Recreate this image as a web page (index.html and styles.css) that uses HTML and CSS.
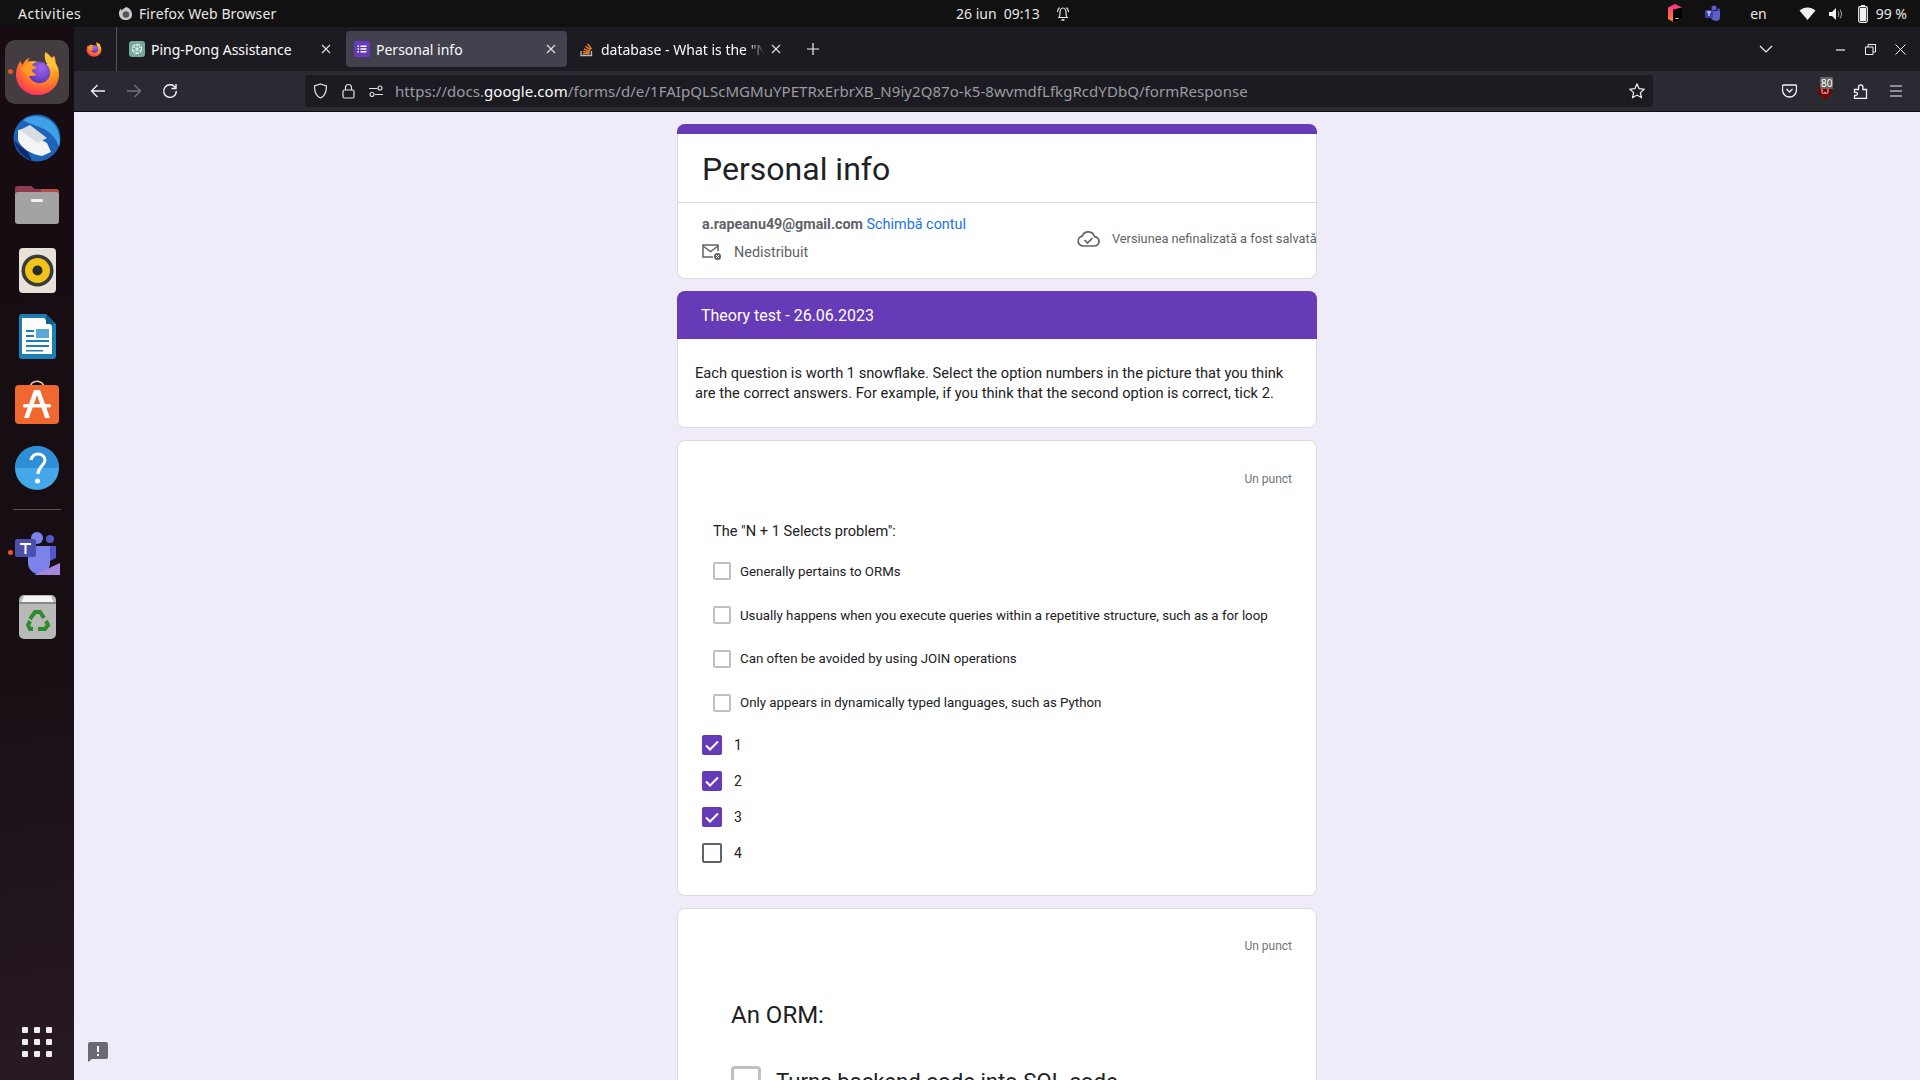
FILE: index.html
```html
<!DOCTYPE html>
<html lang="en">
<head>
    <meta charset="UTF-8">
    <title>Personal info</title>
    <link rel="stylesheet" href="styles.css">
</head>
<body>
    <svg class="defs" width="0" height="0">
        <defs>
            <radialGradient id="fx_flame" cx="0.65" cy="0.2" r="1">
                <stop offset="0" stop-color="#ffde3d"/>
                <stop offset="0.45" stop-color="#ff8a1f"/>
                <stop offset="0.8" stop-color="#ff3a55"/>
                <stop offset="1" stop-color="#d6148c"/>
            </radialGradient>
            <radialGradient id="fx_globe" cx="0.6" cy="0.3" r="0.8">
                <stop offset="0" stop-color="#a565ee"/>
                <stop offset="1" stop-color="#4a2fb5"/>
            </radialGradient>
            <linearGradient id="jb_side" x1="0" y1="0" x2="0" y2="1">
                <stop offset="0" stop-color="#ff2f8e"/>
                <stop offset="1" stop-color="#ff8a1f"/>
            </linearGradient>
            <symbol id="firefox" viewBox="0 0 48 48">
                <path fill="url(#fx_flame)" d="M41 7c2 4 1 6 2 8 3 5 3 9 3 11 0 12-10 21-22 21S2 38 2 26c0-6 2-11 5-14 0 2 1 4 2 4 1-3 4-6 7-7-1 2-2 3-2 4 3-1 7-1 10 0 4 1 7 3 9 6 0-5 3-8 8-12z"/>
                <circle cx="26" cy="24" r="11" fill="url(#fx_globe)"/>
                <path fill="#ff9a26" d="M6 20c4-3 8-5 11-4 4 1 5 2 6 4-2 0-4 1-5 2 1 2 3 3 5 4-3 2-6 2-9 1-3-2-5-4-8-7z"/>
                <path fill="#ffc33a" d="M32 3c6 4 12 11 13 21-3-5-7-8-12-10-2-4-2-8-1-11z"/>
            </symbol>
        </defs>
    </svg>

    <div class="topbar">
        <span class="top_activities">Activities</span>
        <span class="top_app">
            <svg width="15" height="15" viewBox="0 0 16 16"><path fill="#c9c9c9" d="M9 1c3 1 6 4 6 8 0 4-3 6-7 6s-7-3-7-7c0-2 1-4 2-5l1 2c1-2 3-3 5-4z"/><circle cx="8.500" cy="9" r="3.500" fill="#555"/></svg>
            Firefox Web Browser
        </span>
        <div class="top_clock">
            <span>26 iun&nbsp; 09:13</span>
            <svg width="14" height="16" viewBox="0 0 14 16" fill="none" stroke="#e8e8e8" stroke-width="1.200"><path d="M3 11.500c1-1 1-3 1-5s1-4.500 3-4.500 3 2.500 3 4.500 0 4 1 5zM1.500 6c0-2 1-3.500 2-4.500M12.500 6c0-2-1-3.500-2-4.500"/><path d="M5.500 14h3" stroke-width="1.600"/></svg>
        </div>
        <div class="top_status">
            <svg class="st_jb" width="16" height="19" viewBox="0 0 16 19"><path fill="url(#jb_side)" d="M8 0l7 3.500V15l-7 4-7-4V3.500z"/><path fill="#000" d="M6 5.500l9-2V15l-7 4-2-1.200z"/><path d="M8.500 14.500h3" stroke="#ddd"/></svg>
            <svg class="st_teams" width="17" height="17" viewBox="0 0 17 17"><circle cx="10" cy="3" r="2.500" fill="#5d5fc9"/><circle cx="14.500" cy="5" r="1.700" fill="#4649b0"/><path fill="#5d5fc9" d="M6 6h10v6a4 4 0 0 1-4 4 6 6 0 0 1-6-6z"/><rect x="1" y="5" width="8" height="8" rx="1" fill="#3f42a8"/><path d="M3 7h4M5 7v4" stroke="#fff"/></svg>
            <span class="st_lang">en</span>
            <svg class="st_wifi" width="17" height="13" viewBox="0 0 17 13"><path fill="#f2f2f2" d="M0.500 3.500C3 1.500 5.500.5 8.500.5s5.500 1 8 3l-8 9.500z"/></svg>
            <svg class="st_sound" width="14" height="14" viewBox="0 0 14 14"><path fill="#f2f2f2" d="M0 5h3l4-4v12l-4-4H0z"/><path fill="none" stroke="#aaa" d="M9 4c1 2 1 4 0 6M11 2.500c2 3 2 6 0 9"/></svg>
            <svg class="st_batt" width="10" height="18" viewBox="0 0 10 18"><rect x="3" width="4" height="2" fill="#f2f2f2"/><rect x=".7" y="1.700" width="8.600" height="15.600" rx="1.500" fill="none" stroke="#f2f2f2" stroke-width="1.200"/><rect x="2" y="3" width="6" height="13" fill="#f2f2f2"/></svg>
            <span class="st_pct">99 %</span>
        </div>
    </div>

    <div class="desktop">
        <nav class="dock">
            <div class="dock_slot dock_active">
                <span class="dock_dot"></span>
                <svg width="47" height="47"><use href="#firefox"/></svg>
            </div>
            <div class="dock_slot">
                <svg width="48" height="48" viewBox="0 0 48 48">
                    <circle cx="24" cy="24" r="23.500" fill="#1d63b8"/>
                    <path fill="#3fa0e8" d="M10 6c8-6 22-5 30 3 6 6 8 18 6 24-3-9-8-14-15-18-8-4-15-5-21-9z"/>
                    <path fill="#0f2a6e" d="M1 26c2 9 8 17 18 21l-4-9-8-6z"/>
                    <path fill="#f4f4f4" d="M5 16l6-1 23 14 4 9-9 4c-10-1-21-8-24-16z"/>
                    <path fill="#d9dde2" d="M7 16l10-5 17 13-9 5z"/>
                </svg>
            </div>
            <div class="dock_slot">
                <svg width="44" height="40" viewBox="0 0 44 40">
                    <path fill="#8e3b52" d="M0 5a3 3 0 0 1 3-3h13l4 3h21a3 3 0 0 1 3 3v10H0z"/>
                    <path fill="#c4563c" d="M26 5h15a3 3 0 0 1 3 3v10H26z" opacity=".7"/>
                    <rect y="8" width="44" height="32" rx="3" fill="#a3a3a3"/>
                    <rect x="16" y="15" width="12" height="3" rx="1" fill="#f0f0f0"/>
                </svg>
            </div>
            <div class="dock_slot">
                <svg width="37" height="45" viewBox="0 0 37 45">
                    <rect width="37" height="45" rx="4" fill="#e6e2d8"/>
                    <circle cx="18.500" cy="22.500" r="16" fill="#3a3a3a"/>
                    <circle cx="18.500" cy="22.500" r="12.500" fill="#f0c419"/>
                    <circle cx="18.500" cy="22.500" r="5" fill="#2a2a2a"/>
                </svg>
            </div>
            <div class="dock_slot">
                <svg width="37" height="45" viewBox="0 0 37 45">
                    <path fill="#1b7fb5" d="M3 0h24l10 10v32a3 3 0 0 1-3 3H3a3 3 0 0 1-3-3V3a3 3 0 0 1 3-3z"/>
                    <path fill="#fff" d="M3 4h22l8 8v28H3z"/>
                    <path fill="#0f5f8f" d="M27 0l10 10H27z"/>
                    <path fill="#1b7fb5" d="M7 16h8v2H7zM7 21h8v2H7zM7 26h23v2H7zM7 31h23v2H7zM7 36h17v1.500H7z"/>
                    <path fill="#5aa8d6" d="M17 15h13v9H17z"/>
                </svg>
            </div>
            <div class="dock_slot">
                <svg width="44" height="44" viewBox="0 0 44 44">
                    <path fill="none" stroke="#e8c9a8" stroke-width="1.500" d="M15 8c0-9 14-9 14 0"/>
                    <rect y="5" width="44" height="39" rx="4" fill="#f0682f"/>
                    <path fill="#fff" d="M19 10h6l10 28h-5l-8-23-8 23H9z"/>
                    <rect x="8" y="24" width="28" height="3.500" rx="1.500" fill="#fff"/>
                </svg>
            </div>
            <div class="dock_slot">
                <svg width="44" height="44" viewBox="0 0 44 44">
                    <circle cx="22" cy="22" r="22" fill="#45a8e8"/>
                    <path fill="#2f8fd6" d="M0 22a22 22 0 0 1 44 0z"/>
                    <path fill="none" stroke="#fff" stroke-width="3" d="M16 14c1-4 4-6 7-6 4 0 7 3 7 6 0 6-7 6-7 14"/>
                    <circle cx="22.500" cy="35" r="2.500" fill="#fff"/>
                </svg>
            </div>
            <div class="dock_sep"></div>
            <div class="dock_slot dock_slot_short">
                <span class="dock_dot"></span>
                <svg width="46" height="43" viewBox="0 0 46 43">
                    <circle cx="23" cy="6" r="6" fill="#7b83eb"/>
                    <circle cx="36" cy="7" r="4" fill="#5059c9"/>
                    <path fill="#5059c9" d="M30 14h12v12l-12 6z"/>
                    <path fill="#7b83eb" d="M14 14h22v17a11 11 0 0 1-22 0z"/>
                    <rect x="1" y="7" width="21" height="18" rx="2" fill="#4b50ad"/>
                    <path fill="#fff" d="M6 11h11v2h-4.500v9h-2v-9H6z"/>
                    <path fill="#a487dc" d="M20 43l26-12v12z"/>
                </svg>
            </div>
            <div class="dock_slot dock_slot_short">
                <svg width="37" height="44" viewBox="0 0 37 44">
                    <rect width="37" height="44" rx="5" fill="#b9b9b7"/>
                    <path fill="#f4f4f4" d="M5 1h27l3 7H2z"/>
                    <rect x="0" y="7" width="37" height="2" fill="#888"/>
                    <g fill="none" stroke="#2e8b2e" stroke-width="4">
                        <path d="M11 24l5-7h5l4 6"/>
                        <path d="M27 26l2 4-3 4h-7"/>
                        <path d="M14 34h-3l-2-4 2-4"/>
                    </g>
                </svg>
            </div>
            <div class="dock_grid">
                <i></i><i></i><i></i><i></i><i></i><i></i><i></i><i></i><i></i>
            </div>
        </nav>

        <div class="browser">
            <div class="tabbar">
                <div class="tab_logo"><svg width="16" height="16"><use href="#firefox"/></svg></div>
                <div class="tab">
                    <svg class="favicon" width="16" height="16" viewBox="0 0 16 16">
                        <rect width="16" height="16" rx="3" fill="#74aa9c"/>
                        <circle cx="8" cy="8" r="4.500" fill="none" stroke="#fff" stroke-width="1.200" stroke-dasharray="4 1"/>
                        <path d="M5 6l6 4M11 6l-6 4M8 3.500v9" stroke="#fff" stroke-width=".7"/>
                    </svg>
                    <span class="tab_title">Ping-Pong Assistance</span>
                    <svg class="tab_close" width="10" height="10" viewBox="0 0 10 10"><path d="M1 1l8 8M9 1l-8 8" stroke="#e3e3e6" stroke-width="1.100"/></svg>
                </div>
                <div class="tab tab_active">
                    <svg class="favicon" width="16" height="16" viewBox="0 0 16 16">
                        <rect width="16" height="16" rx="1" fill="#673ab7"/>
                        <path d="M3.500 4.500h1.500v1.500H3.500zM3.500 7.300h1.500v1.500H3.500zM3.500 10h1.500v1.500H3.500zM6.500 4.500h6v1.500h-6zM6.500 7.300h6v1.500h-6zM6.500 10h6v1.500h-6z" fill="#fff"/>
                    </svg>
                    <span class="tab_title">Personal info</span>
                    <svg class="tab_close" width="10" height="10" viewBox="0 0 10 10"><path d="M1 1l8 8M9 1l-8 8" stroke="#e3e3e6" stroke-width="1.100"/></svg>
                </div>
                <div class="tab">
                    <svg class="favicon" width="16" height="16" viewBox="0 0 16 16" fill="none">
                        <path d="M2 10v4.500h10.500V10" stroke="#bcbbbb" stroke-width="1.300"/>
                        <path d="M4 12.500h6.500M4.200 10.300l6.300 1M5 7.800l6 2.500M6.500 5.300l5.200 3.600M8.700 3l3.800 5" stroke="#f48024" stroke-width="1.300"/>
                    </svg>
                    <span class="tab_title tab_fade">database - What is the "N+1 selects problem" in ORM</span>
                    <svg class="tab_close" width="10" height="10" viewBox="0 0 10 10"><path d="M1 1l8 8M9 1l-8 8" stroke="#e3e3e6" stroke-width="1.100"/></svg>
                </div>
                <svg class="tab_new" width="14" height="14" viewBox="0 0 14 14"><path d="M7 1v12M1 7h12" stroke="#f2f2f4" stroke-width="1.200"/></svg>
                <svg class="tab_list" width="14" height="8" viewBox="0 0 14 8" fill="none"><path d="M1 1l6 6 6-6" stroke="#f2f2f4" stroke-width="1.200"/></svg>
                <div class="win_btns">
                    <svg width="11" height="11" viewBox="0 0 11 11"><path d="M1 6h9" stroke="#f2f2f4" stroke-width="1.200"/></svg>
                    <svg width="11" height="11" viewBox="0 0 11 11" fill="none" stroke="#f2f2f4"><path d="M.5 3h7.500v7.500H.5zM3 3V.5h7.500V8H8"/></svg>
                    <svg width="11" height="11" viewBox="0 0 11 11"><path d="M.5.5l10 10M10.500.5l-10 10" stroke="#f2f2f4"/></svg>
                </div>
            </div>

            <div class="toolbar">
                <svg class="tb_back" width="16" height="16" viewBox="0 0 16 16" fill="none" stroke="#f2f2f4" stroke-width="1.300"><path d="M15 8H1.500M7.500 2L1.500 8l6 6"/></svg>
                <svg class="tb_fwd" width="16" height="16" viewBox="0 0 16 16" fill="none" stroke="#74737a" stroke-width="1.300"><path d="M1 8h13.500M8.500 2l6 6-6 6"/></svg>
                <svg class="tb_reload" width="16" height="16" viewBox="0 0 16 16" fill="none" stroke="#f2f2f4" stroke-width="1.400"><path d="M13.500 5A6.300 6.300 0 1 0 14.300 8"/><path d="M14 1v4.500H9.500" /></svg>
                <div class="urlbar">
                    <svg width="15" height="16" viewBox="0 0 15 16" fill="none" stroke="#e3e3e6" stroke-width="1.200"><path d="M7.500 1l6 2c0 6-1 10-6 12C2.500 13 1.500 9 1.500 3z"/></svg>
                    <svg class="ub_lock" width="13" height="16" viewBox="0 0 13 16" fill="none" stroke="#e3e3e6" stroke-width="1.200"><rect x="1" y="7" width="11" height="8" rx="1.500"/><path d="M3.500 7V4.500a3 3 0 0 1 6 0V7"/></svg>
                    <svg class="ub_perm" width="15" height="12" viewBox="0 0 15 12" fill="none" stroke="#e3e3e6" stroke-width="1.100"><path d="M0 3.500h8.500M14 9.500H6"/><circle cx="11" cy="3" r="2"/><circle cx="3" cy="9.500" r="2"/></svg>
                    <span class="ub_text">https://docs.<b>google.com</b>/forms/d/e/1FAIpQLScMGMuYPETRxErbrXB_N9iy2Q87o-k5-8wvmdfLfkgRcdYDbQ/formResponse</span>
                    <svg class="ub_star" width="16" height="16" viewBox="0 0 16 16" fill="none" stroke="#f2f2f4" stroke-width="1.200"><path d="M8 1l2.100 4.600 5 .6-3.700 3.400 1 5L8 12.100l-4.400 2.500 1-5L.9 6.200l5-.6z"/></svg>
                </div>
                <div class="tb_right">
                    <svg width="15" height="14" viewBox="0 0 15 14" fill="none" stroke="#f2f2f4" stroke-width="1.300"><path d="M1.500 1h12a1 1 0 0 1 1 1v4a7 7 0 0 1-14 0V2a1 1 0 0 1 1-1z"/><path d="M4.500 5l3 3 3-3"/></svg>
                    <div class="ublock">
                        <svg width="14" height="16" viewBox="0 0 14 16"><path fill="#800000" d="M0 2h14c0 7-1 11-7 14C1 13 0 9 0 2z"/><path d="M4 6v3a1.500 1.500 0 0 0 3 0 1.500 1.500 0 0 0 3 0V6" fill="none" stroke="#ddd"/></svg>
                        <span class="ublock_badge">80</span>
                    </div>
                    <svg width="15" height="16" viewBox="0 0 15 16" fill="none" stroke="#f2f2f4" stroke-width="1.300"><path d="M1.500 6.500h4V4a2.200 2.200 0 0 1 4.400 0v2.500h3.600v8.800h-12v-3h1.500a1.400 1.400 0 0 0 0-2.900H1.500z"/></svg>
                    <svg width="14" height="12" viewBox="0 0 14 12"><path d="M1 1h12M1 6h12M1 11h12" stroke="#f2f2f4" stroke-width="1.200"/></svg>
                </div>
            </div>

            <main class="page">
                <section class="card card_head">
                    <div class="accent"></div>
                    <h1 class="form_title">Personal info</h1>
                    <div class="account">
                        <div>
                            <div class="acc_mail"><b>a.rapeanu49@gmail.com</b> <a href="#">Schimbă contul</a></div>
                            <div class="acc_share">
                                <svg width="20" height="17" viewBox="0 0 20 17" fill="none" stroke="#5f6368" stroke-width="1.500"><path d="M11 13H1V1h15v6"/><path d="M1 2l7.500 5.500L16 2"/><circle cx="15.500" cy="12.500" r="3.500" fill="#5f6368" stroke="none"/><path d="M14 11l3 3M17 11l-3 3" stroke="#fff" stroke-width="1"/></svg>
                                Nedistribuit
                            </div>
                        </div>
                        <div class="acc_saved">
                            <svg width="23" height="17" viewBox="0 0 23 17" fill="none" stroke="#5f6368" stroke-width="1.700"><path d="M6 16a5 5 0 0 1-.8-9.900A6.500 6.500 0 0 1 17.600 6.600 4.700 4.700 0 0 1 17 16z"/><path d="M7.500 10l3 3 5-5"/></svg>
                            <span>Versiunea nefinalizată a fost salvată</span>
                        </div>
                    </div>
                </section>

                <section class="card card_section">
                    <div class="section_head">Theory test - 26.06.2023</div>
                    <p class="section_body">Each question is worth 1 snowflake. Select the option numbers in the picture that you think are the correct answers. For example, if you think that the second option is correct, tick 2.</p>
                </section>

                <section class="card card_question">
                    <div class="points">Un punct</div>
                    <div class="q_text">The "N + 1 Selects problem":</div>
                    <ul class="q_options">
                        <li><span class="box"></span>Generally pertains to ORMs</li>
                        <li><span class="box"></span>Usually happens when you execute queries within a repetitive structure, such as a for loop</li>
                        <li><span class="box"></span>Can often be avoided by using JOIN operations</li>
                        <li><span class="box"></span>Only appears in dynamically typed languages, such as Python</li>
                    </ul>
                    <ul class="q_answers">
                        <li><span class="tick tick_on"><svg width="14" height="11" viewBox="0 0 14 11" fill="none"><path d="M1 5.500l4 4 8-8" stroke="#fff" stroke-width="2"/></svg></span>1</li>
                        <li><span class="tick tick_on"><svg width="14" height="11" viewBox="0 0 14 11" fill="none"><path d="M1 5.500l4 4 8-8" stroke="#fff" stroke-width="2"/></svg></span>2</li>
                        <li><span class="tick tick_on"><svg width="14" height="11" viewBox="0 0 14 11" fill="none"><path d="M1 5.500l4 4 8-8" stroke="#fff" stroke-width="2"/></svg></span>3</li>
                        <li><span class="tick"></span>4</li>
                    </ul>
                </section>

                <section class="card card_next">
                    <div class="points">Un punct</div>
                    <div class="q_big">An ORM:</div>
                    <div class="big_option"><span class="box box_big"></span>Turns backend code into SQL code</div>
                </section>

                <svg class="feedback" width="20" height="20" viewBox="0 0 20 20"><path fill="#6b6a72" d="M2 0h16a2 2 0 0 1 2 2v13a2 2 0 0 1-2 2H4l-4 3V2a2 2 0 0 1 2-2z"/><path fill="#fff" d="M9 4h2v6H9zM9 12h2v2H9z"/></svg>
            </main>
        </div>
    </div>
</body>
</html>
```

FILE: styles.css
```css
* {
    box-sizing: border-box;
}

html,
body {
    margin: 0;
    height: 100%;
    overflow: hidden;
}

body {
    display: flex;
    flex-direction: column;
    font-family: "Noto Sans", sans-serif;
    background-color: #f0ebf8;
}

.defs {
    position: absolute;
}

svg {
    display: block;
    flex: none;
}

/* ubuntu panel */
.topbar {
    height: 27px;
    flex: none;
    background-color: #111;
    color: #e8e8e8;
    font-size: 14px;
    display: flex;
    align-items: center;
    padding-left: 18px;
    position: relative;
}

.top_activities {
    width: 100px;
    letter-spacing: .5px;
}

.top_app {
    display: flex;
    align-items: center;
    gap: 6px;
    letter-spacing: .1px;
}

.top_clock {
    position: absolute;
    left: 956px;
    display: flex;
    align-items: center;
    gap: 16px;
}

.top_status {
    margin-left: auto;
    display: flex;
    align-items: center;
    padding-right: 13px;
}

.st_teams {
    margin-left: 21px;
}

.st_lang {
    margin-left: 29px;
    margin-right: 32px;
}

.st_sound {
    margin-left: 13px;
}

.st_batt {
    margin-left: 15px;
}

.st_pct {
    margin-left: 8px;
}

/* dock */
.desktop {
    flex: 1;
    display: flex;
    min-height: 0;
}

.dock {
    width: 74px;
    flex: none;
    background: linear-gradient(170deg, #160c12 0%, #170e14 60%, #281a24 100%);
    display: flex;
    flex-direction: column;
    align-items: center;
    padding-top: 13px;
    padding-bottom: 23px;
}

.dock_slot {
    width: 64px;
    height: 66px;
    flex: none;
    display: flex;
    align-items: center;
    justify-content: center;
    position: relative;
}

.dock_slot_short {
    height: 64px;
}

.dock_active {
    background-color: #433c40;
    border-radius: 10px;
    height: 64px;
    margin-bottom: 1px;
}

.dock_dot {
    position: absolute;
    left: 3px;
    top: 50%;
    width: 5px;
    height: 5px;
    margin-top: -3px;
    border-radius: 50%;
    background-color: #e95420;
}

.dock_sep {
    width: 48px;
    height: 1px;
    background-color: #5b5358;
    margin-top: 8px;
    margin-bottom: 11px;
}

.dock_grid {
    margin-top: auto;
    display: grid;
    grid-template-columns: repeat(3, 6px);
    gap: 6px;
}

.dock_grid i {
    height: 6px;
    border-radius: 1px;
    background-color: #eee;
}

/* firefox chrome */
.browser {
    flex: 1;
    min-width: 0;
    display: flex;
    flex-direction: column;
}

.tabbar {
    height: 44px;
    flex: none;
    background-color: #1c1b22;
    display: flex;
    align-items: center;
    color: #fbfbfe;
    font-size: 14px;
}

.tab_logo {
    width: 43px;
    height: 100%;
    border-right: 1px solid #55545b;
    display: flex;
    align-items: center;
    padding-left: 12px;
    margin-right: 4px;
}

.tab {
    width: 221px;
    height: 36px;
    margin-right: 4px;
    padding: 0 11px 0 8px;
    border-radius: 4px;
    display: flex;
    align-items: center;
    gap: 6px;
}

.tab_active {
    background-color: #42414d;
}

.tab_title {
    flex: 1;
    min-width: 0;
    white-space: nowrap;
    overflow: hidden;
}

.tab_fade {
    -webkit-mask-image: linear-gradient(to right, #000 90%, transparent 100%);
    mask-image: linear-gradient(to right, #000 90%, transparent 100%);
}

.tab_new {
    margin-left: 10px;
}

.tab_list {
    margin-left: 939px;
}

.win_btns {
    margin-left: auto;
    margin-right: 14px;
    display: flex;
    gap: 19px;
}

.toolbar {
    height: 41px;
    flex: none;
    background-color: #2b2a33;
    border-bottom: 1px solid #0c0c0d;
    display: flex;
    align-items: center;
    padding-left: 16px;
}

.tb_fwd {
    margin-left: 20px;
}

.tb_reload {
    margin-left: 20px;
}

.urlbar {
    width: 1348px;
    height: 32px;
    margin-left: 127px;
    background-color: #1c1b22;
    border-radius: 4px;
    display: flex;
    align-items: center;
    padding: 0 8px 0 8px;
    color: #9b9ba1;
    font-size: 15px;
    letter-spacing: .05px;
    white-space: nowrap;
}

.ub_lock {
    margin-left: 14px;
}

.ub_perm {
    margin-left: 14px;
}

.ub_text {
    margin-left: 11px;
    flex: 1;
}

.ub_text b {
    font-weight: 400;
    color: #fbfbfe;
}

.tb_right {
    margin-left: auto;
    margin-right: 17px;
    display: flex;
    align-items: center;
    gap: 21px;
}

.ublock {
    position: relative;
}

.ublock_badge {
    position: absolute;
    left: 2px;
    top: -6px;
    padding: 0 1px;
    background-color: #666;
    color: #fff;
    font-size: 10px;
    line-height: 12px;
    border-radius: 1px;
}

/* google form */
.page {
    flex: 1;
    min-height: 0;
    background-color: #f0ebf8;
    padding-top: 12px;
    display: flex;
    flex-direction: column;
    align-items: center;
    gap: 12px;
    overflow: hidden;
    position: relative;
    font-family: Roboto, sans-serif;
    color: #202124;
}

.feedback {
    position: absolute;
    left: 14px;
    bottom: 18px;
}

.card {
    width: 640px;
    flex: none;
    background-color: #fff;
    box-shadow: inset 0 0 0 1px #dadce0;
    border-radius: 8px;
    overflow: hidden;
}

.accent {
    height: 10px;
    background-color: #673ab7;
}

.form_title {
    margin: 0;
    height: 69px;
    padding: 15px 25px 0;
    font-size: 32px;
    line-height: 40px;
    font-weight: 400;
    border-bottom: 1px solid #dadce0;
}

.account {
    height: 76px;
    padding-left: 25px;
    padding-bottom: 6px;
    display: flex;
    justify-content: space-between;
    align-items: center;
    font-size: 14.400px;
    white-space: nowrap;
}

.acc_mail {
    color: #5f6368;
    line-height: 20px;
}

.acc_mail b {
    font-size: 14.300px;
    font-weight: 700;
}

.acc_mail a {
    color: #1a73e8;
    text-decoration: none;
}

.acc_share {
    display: flex;
    align-items: center;
    gap: 12px;
    color: #5f6368;
    margin-top: 8px;
    line-height: 20px;
}

.acc_saved {
    display: flex;
    align-items: center;
    gap: 12px;
    color: #5f6368;
    font-size: 12.750px;
    width: 240px;
    overflow: hidden;
}

.section_head {
    height: 48px;
    padding-left: 24px;
    background-color: #673ab7;
    color: #fff;
    font-size: 16px;
    line-height: 49px;
}

.section_body {
    margin: 0;
    padding: 24px 18px 0;
    height: 89px;
    font-size: 14.670px;
    line-height: 20px;
}

.card_question {
    height: 456px;
    padding: 31px 25px 0;
}

.points {
    text-align: right;
    font-size: 12px;
    line-height: 16px;
    color: #70757a;
}

.q_text {
    margin-top: 34px;
    padding-left: 11px;
    font-size: 14.600px;
    line-height: 20px;
}

.q_options,
.q_answers {
    list-style: none;
    margin: 0;
    padding: 0;
}

.q_options {
    padding-left: 11px;
    margin-top: 8.500px;
}

.q_options li {
    height: 43.800px;
    display: flex;
    align-items: center;
    gap: 9px;
    font-size: 13.300px;
    white-space: nowrap;
}

.box {
    width: 18px;
    height: 18px;
    flex: none;
    border: 2px solid #bdc1c6;
    border-radius: 2px;
}

.q_answers {
    margin-top: 2.500px;
}

.q_answers li {
    height: 36px;
    display: flex;
    align-items: center;
    gap: 12px;
    font-size: 14px;
}

.tick {
    width: 20px;
    height: 20px;
    flex: none;
    border: 2px solid #5f6368;
    border-radius: 2px;
    display: flex;
    align-items: center;
    justify-content: center;
}

.tick_on {
    background-color: #673ab7;
    border-color: #673ab7;
}

.card_next {
    padding: 30px 25px 0;
    height: 300px;
}

.q_big {
    margin-top: 45px;
    padding-left: 29px;
    font-size: 24px;
    line-height: 32px;
}

.big_option {
    margin-top: 35px;
    padding-left: 29px;
    display: flex;
    gap: 15px;
    font-size: 22.200px;
    line-height: 30px;
    white-space: nowrap;
}

.box_big {
    width: 30px;
    height: 30px;
    border-width: 3px;
    border-radius: 4px;
}
```
